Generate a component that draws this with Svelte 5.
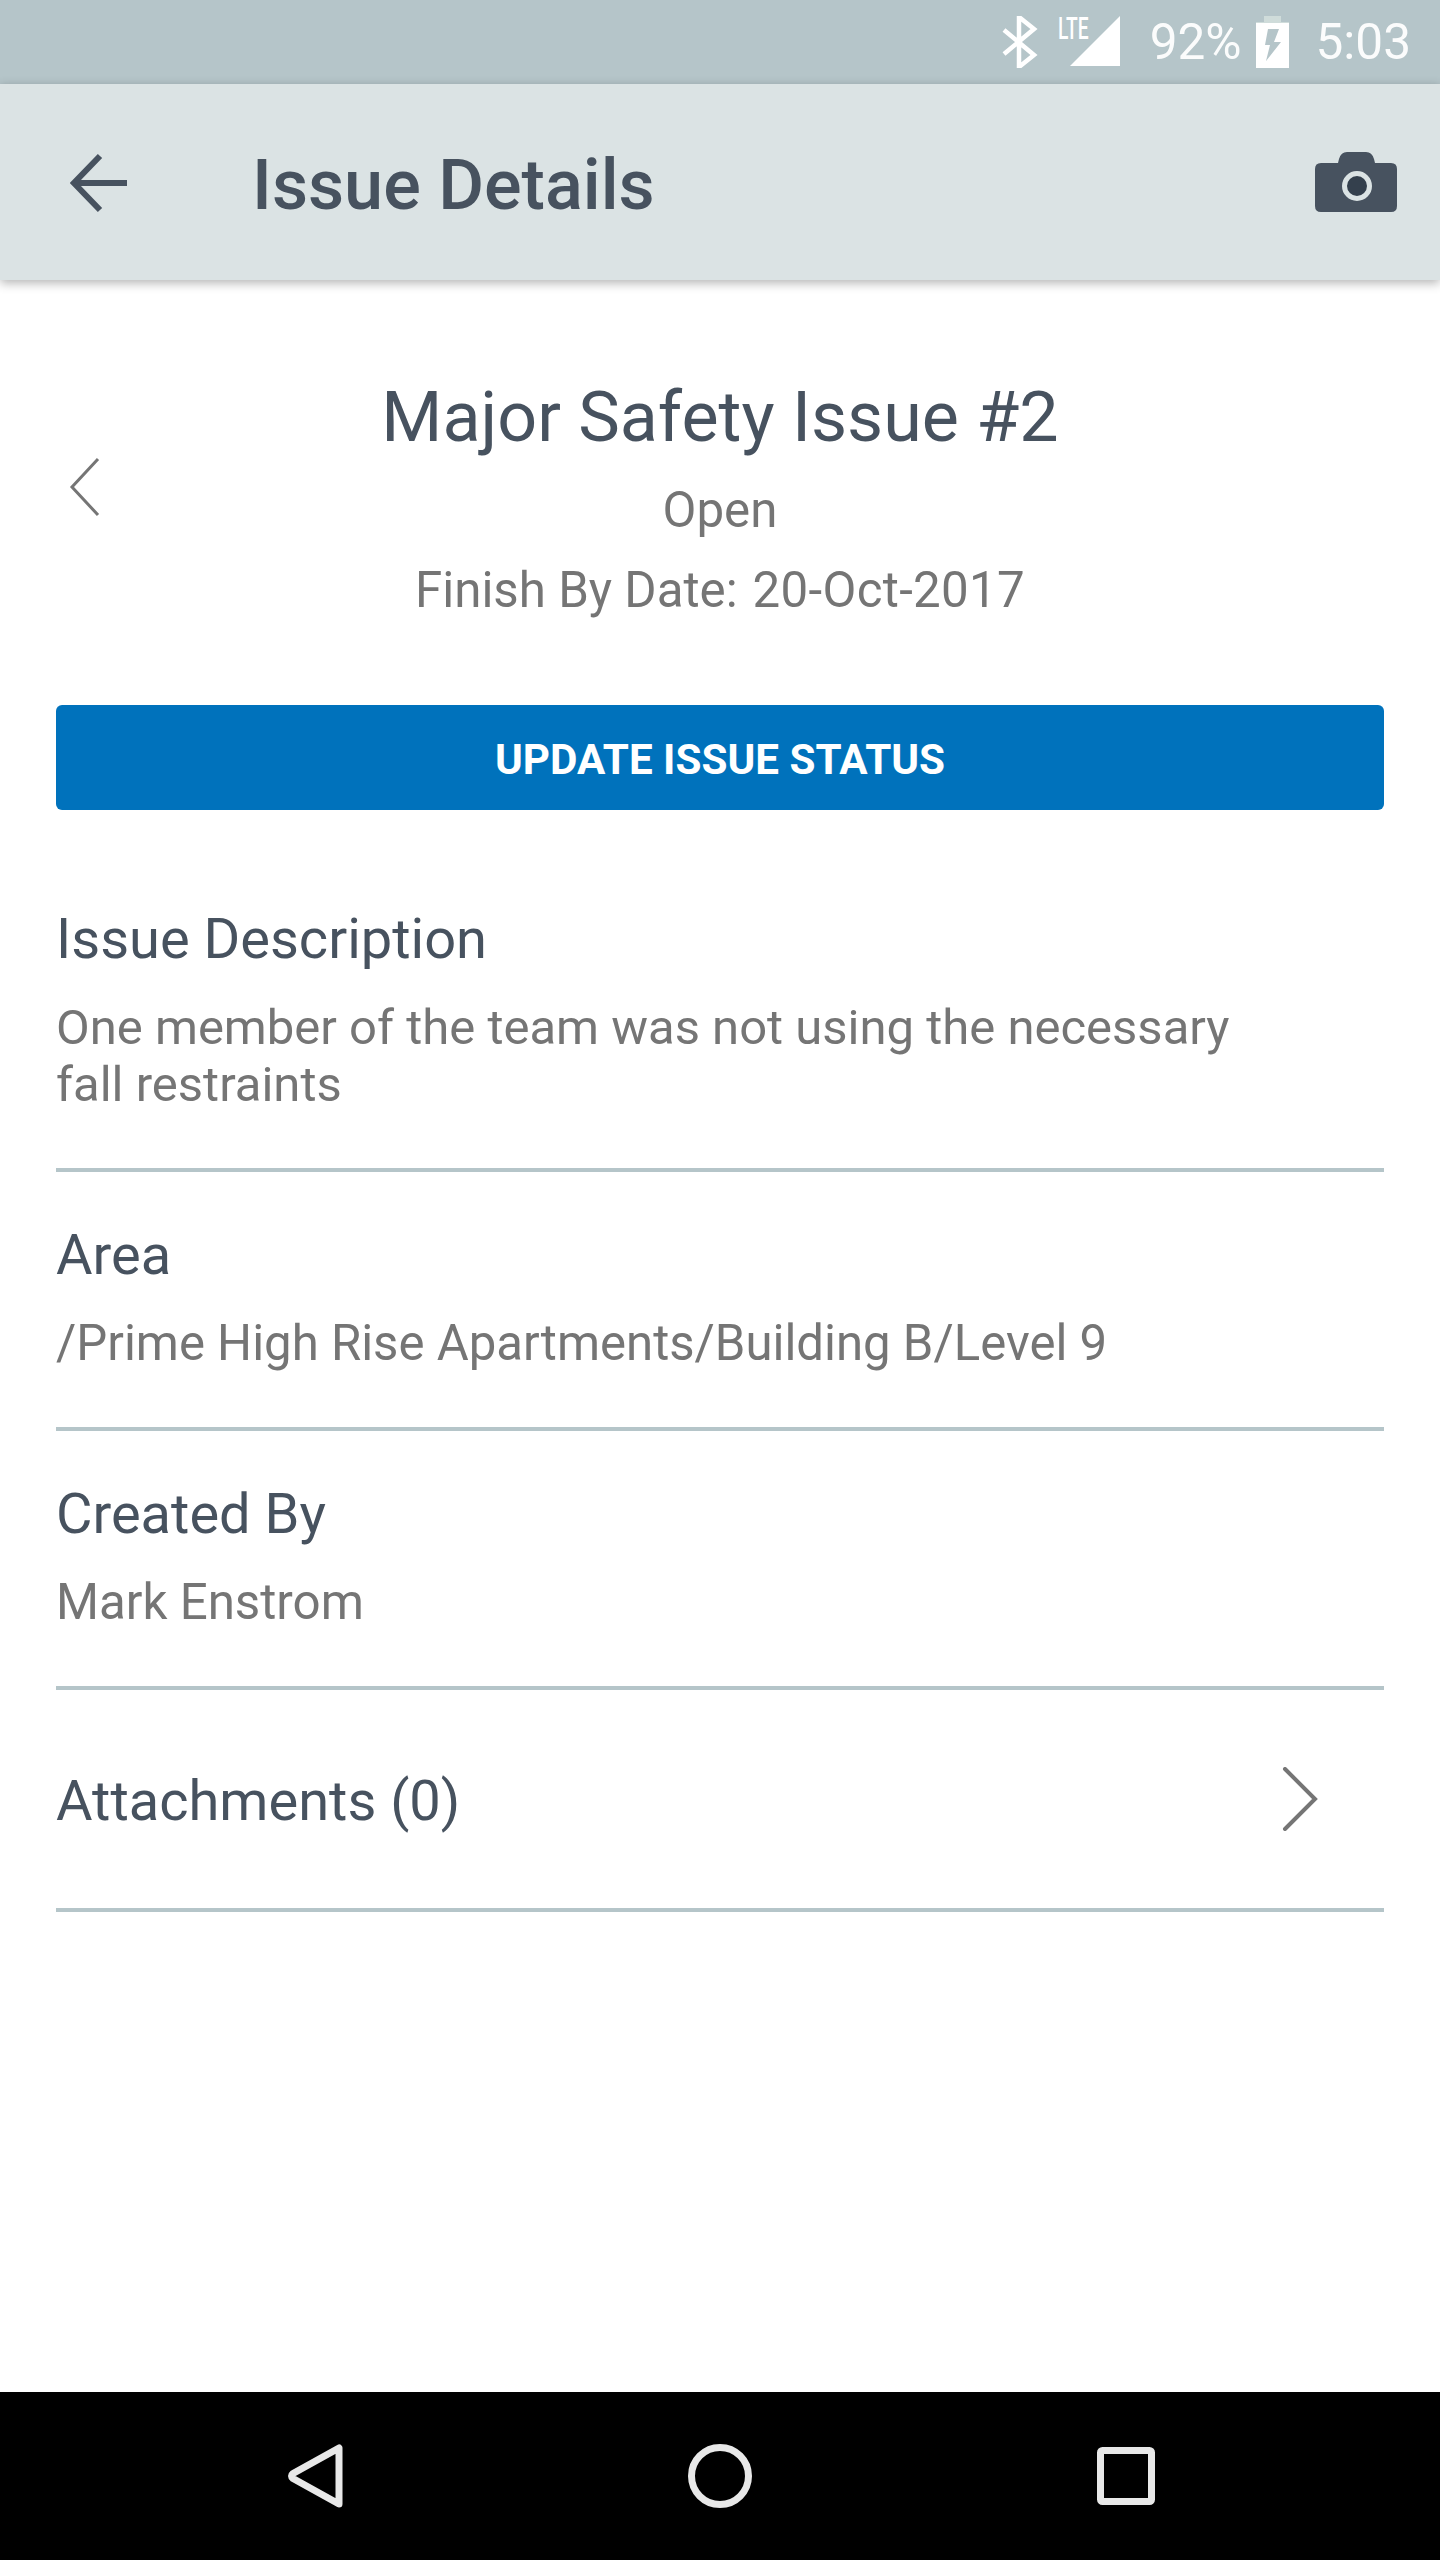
<script>
  const sections = [
    { label: "Issue Description", lines: ["One member of the team was not using the necessary", "fall restraints"], cls: "desc" },
    { label: "Area", lines: ["/Prime High Rise Apartments/Building B/Level 9"], cls: "area" },
    { label: "Created By", lines: ["Mark Enstrom"], cls: "" }
  ];
</script>

<div class="screen">
  <div class="status">
    <svg class="bt" width="36" height="52" viewBox="0 0 36 52">
      <path d="M2 14 L32 39 L17 51 V1 L32 13 L2 38" fill="none" stroke="#fff" stroke-width="4.5" />
    </svg>
    <div class="signal">
      <span class="lte">LTE</span>
      <svg width="52" height="52" viewBox="0 0 52 52"><path d="M50 0 V50 H0 Z" fill="#fff" /></svg>
    </div>
    <span class="pct">92%</span>
    <svg class="batt" width="33" height="52" viewBox="0 0 33 52">
      <path d="M8 0 H25 V6 H33 V10 H0 V6 H8 Z" fill="#cfdcda" />
      <path fill-rule="evenodd" d="M0 7 H33 V52 H0 Z M12 13 H23 L18 26 H25 L10 45 L14 29 H9 Z" fill="#fff" />
    </svg>
    <span class="time">5:03</span>
  </div>

  <header class="appbar">
    <svg class="back" width="60" height="60" viewBox="0 0 60 60">
      <path d="M3 30 H57 M30 3 L4 30 L30 57" fill="none" stroke="#47525f" stroke-width="6" />
    </svg>
    <h1>Issue Details</h1>
    <svg class="camera" width="82" height="60" viewBox="0 0 82 60">
      <path d="M23 11 L24 7 Q26 0 32 0 H51 Q57 0 59 7 L60 11 H76 Q82 11 82 17 V54 Q82 60 76 60 H6 Q0 60 0 54 V17 Q0 11 6 11 Z" fill="#47525f" />
      <circle cx="42" cy="34" r="12.5" fill="#34404d" stroke="#dbe3e4" stroke-width="5" />
    </svg>
  </header>

  <main>
    <div class="issue-head">
      <svg class="prev" width="34" height="60" viewBox="0 0 34 60">
        <path d="M30 2 L4 30 L30 58" fill="none" stroke="#757575" stroke-width="3" />
      </svg>
      <h2>Major Safety Issue #2</h2>
      <p class="state">Open</p>
      <p class="finish"><span>Finish By Date:</span><span class="date">20-Oct-2017</span></p>
    </div>

    <button class="update">UPDATE ISSUE STATUS</button>

    {#each sections as s}
      <section class={s.cls}>
        <h3>{s.label}</h3>
        {#each s.lines as line}
          <p>{line}</p>
        {/each}
      </section>
    {/each}

    <section class="attach">
      <h3>Attachments (0)</h3>
      <svg width="36" height="64" viewBox="0 0 36 64">
        <path d="M3 2 L33 32 L3 62" fill="none" stroke="#757575" stroke-width="4" stroke-linecap="round" />
      </svg>
    </section>
  </main>

  <nav class="softkeys">
    <svg width="56" height="66" viewBox="0 0 56 66">
      <path d="M52 5 V61 L6 35.5 Q3 33 6 30.5 Z" fill="none" stroke="#e8e8e8" stroke-width="7" stroke-linejoin="round" />
    </svg>
    <svg width="64" height="64" viewBox="0 0 64 64">
      <circle cx="32" cy="32" r="28.5" fill="none" stroke="#e8e8e8" stroke-width="7" />
    </svg>
    <svg width="58" height="58" viewBox="0 0 58 58">
      <rect x="3.5" y="3.5" width="51" height="51" rx="2" fill="none" stroke="#e8e8e8" stroke-width="7" />
    </svg>
  </nav>
</div>

<style>
  :global(body) {
    margin: 0;
    background: #fff;
  }
  .screen {
    width: 1440px;
    height: 2560px;
    display: flex;
    flex-direction: column;
    font-family: Roboto, "Liberation Sans", sans-serif;
    overflow: hidden;
  }
  .status {
    height: 84px;
    background: #b5c5c9;
    display: flex;
    align-items: center;
    justify-content: flex-end;
    padding-right: 29px;
    color: #fff;
    box-sizing: border-box;
  }
  .bt {
    margin-right: 32px;
  }
  .signal {
    display: flex;
    position: relative;
    margin-right: 28px;
  }
  .lte {
    position: absolute;
    left: -12px;
    top: -6px;
    font-size: 31px;
    font-weight: 500;
    transform: scaleX(0.62);
    transform-origin: left top;
  }
  .pct,
  .time {
    font-size: 49.5px;
    font-weight: 400;
    opacity: 0.95;
  }
  .pct {
    margin-right: 14px;
  }
  .time {
    margin-left: 27px;
  }
  .appbar {
    height: 196px;
    background: #dbe3e4;
    display: flex;
    align-items: center;
    padding: 0 43px 0 70px;
    box-shadow: 0 3px 10px rgba(0, 0, 0, 0.3);
    position: relative;
    flex: none;
  }
  .back {
    flex: none;
    margin-top: 2px;
  }
  h1 {
    margin: 0 0 0 122px;
    padding-top: 6px;
    flex: 1;
    font-size: 70.2px;
    font-weight: 500;
    color: #47525f;
  }
  main {
    flex: 1;
    padding: 0 56px;
  }
  .issue-head {
    position: relative;
    text-align: center;
    padding-top: 92px;
    height: 425px;
    box-sizing: border-box;
  }
  .prev {
    position: absolute;
    left: 12px;
    top: 177px;
  }
  h2 {
    margin: 0;
    font-size: 70px;
    font-weight: 400;
    line-height: 90px;
    color: #47525f;
  }
  .state,
  .finish {
    margin: 0;
    font-size: 49.25px;
    line-height: 80px;
    color: #757575;
  }
  .state {
    margin-top: 8px;
  }
  .finish {
    display: flex;
    justify-content: center;
    gap: 15px;
  }
  .date {
    letter-spacing: 0.3px;
  }
  .update {
    display: block;
    width: 100%;
    height: 105px;
    border: 0;
    border-radius: 6px;
    background: #0072bc;
    color: #fff;
    font-family: inherit;
    font-size: 42.2px;
    font-weight: 700;
    padding: 3px 0 0;
  }
  section {
    border-bottom: 4px solid #b5c5c9;
    height: 259px;
    padding-top: 50px;
    box-sizing: border-box;
  }
  section.desc {
    height: 362px;
    padding-top: 96px;
  }
  h3 {
    margin: 0 0 27px;
    font-size: 56px;
    font-weight: 400;
    line-height: 66px;
    color: #47525f;
  }
  section p {
    margin: 0;
    font-size: 49.25px;
    line-height: 57px;
    color: #757575;
  }
  section.desc p {
    font-size: 49px;
  }
  section.area p {
    font-size: 49.12px;
  }
  .attach {
    height: 222px;
    padding: 0 66px 0 0;
    display: flex;
    align-items: center;
    justify-content: space-between;
  }
  .attach h3 {
    margin: 0;
    padding-top: 4px;
  }
  .softkeys {
    height: 168px;
    flex: none;
    background: #000;
    display: flex;
    align-items: center;
    justify-content: center;
    padding-left: 2px;
  }
  .softkeys svg {
    flex: none;
  }
  .softkeys svg:nth-child(1) {
    margin-right: 345px;
  }
  .softkeys svg:nth-child(2) {
    margin-right: 345px;
  }
</style>
